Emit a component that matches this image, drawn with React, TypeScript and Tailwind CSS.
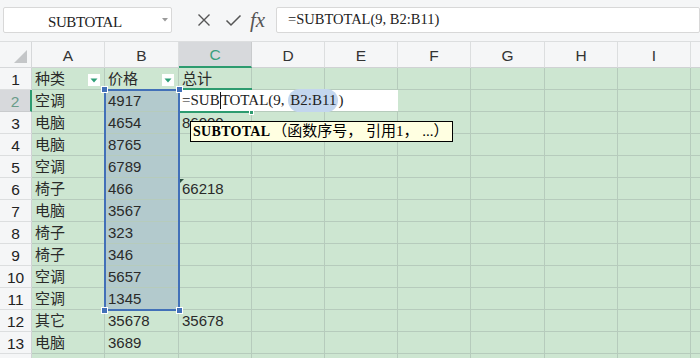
import React from "react";

const COLS = [73, 74, 73, 73, 73, 73, 74, 73, 73, 60];
const LETTERS = ["A", "B", "C", "D", "E", "F", "G", "H", "I", ""];

const A = ["种类", "空调", "电脑", "电脑", "空调", "椅子", "电脑", "椅子", "椅子", "空调", "空调", "其它", "电脑", ""];
const B = ["价格", "4917", "4654", "8765", "6789", "466", "3567", "323", "346", "5657", "1345", "35678", "3689", ""];
const C = ["总计", "", "86000", "", "", "66218", "", "", "", "", "", "35678", "", ""];

const cellFont = { fontFamily: '"Liberation Sans", "Noto Sans CJK SC", sans-serif' };
const serifFont = { fontFamily: '"Liberation Serif", "Noto Sans CJK SC", serif' };

function FilterBtn() {
  return (
    <div className="absolute right-[4px] top-[6px] w-[12px] h-[12px] bg-white flex items-center justify-center">
      <svg width="8" height="5" viewBox="0 0 8 5">
        <polygon points="0.5,0.5 7.5,0.5 4,4.5" fill="#2f9e78" />
      </svg>
    </div>
  );
}

export default function App() {
  return (
    <div className="w-[700px] h-[358px] overflow-hidden bg-[#cde6d1] relative" style={cellFont}>
      {/* toolbar */}
      <div className="h-[42px] bg-[#f5f6f7] flex items-start pt-[7px] border-b border-[#dcdedf]">
        <div className="ml-[3px] w-[169px] h-[26px] bg-white border border-[#d8d8d8] rounded-[2px] flex items-center relative">
          <span className="absolute left-[44px] top-[3px] text-[15px] tracking-[-0.4px] text-[#222]" style={serifFont}>SUBTOTAL</span>
          <svg className="absolute right-[3px] top-[10px]" width="6" height="4" viewBox="0 0 6 4">
            <polygon points="0,0 6,0 3,3.5" fill="#9a9a9a" />
          </svg>
        </div>
        <div className="w-[104px] h-[26px] flex items-center">
          <svg className="ml-[25px]" width="14" height="14" viewBox="0 0 14 14">
            <path d="M1.5 1.5 L12.5 12.5 M12.5 1.5 L1.5 12.5" stroke="#555" strokeWidth="1.4" />
          </svg>
          <svg className="ml-[14px]" width="17" height="13" viewBox="0 0 17 13">
            <path d="M1.5 6.5 L6 11 L15.5 1.5" stroke="#555" strokeWidth="1.5" fill="none" />
          </svg>
          <span className="ml-[8px] text-[21px] italic text-[#555] leading-none" style={{ fontFamily: '"Liberation Serif", serif' }}>fx</span>
        </div>
        <div className="flex-1 h-[26px] bg-white border border-[#d8d8d8] rounded-[2px] flex items-center pl-[11px]">
          <span className="text-[14.5px] text-[#222] whitespace-pre" style={serifFont}>=SUBTOTAL(9, B2:B11)</span>
        </div>
      </div>

      {/* grid */}
      <div className="relative">
        {/* header row */}
        <div className="flex h-[26px]">
          <div className="w-[32px] shrink-0 h-full bg-[#f5f6f7] border-r border-b border-[#d6d8da] relative">
            <svg className="absolute left-[14px] top-[8px]" width="13" height="13" viewBox="0 0 13 13">
              <polygon points="13,0 13,13 0,13" fill="#c4c6c8" />
            </svg>
          </div>
          {COLS.map((w, i) => {
            const sel = i === 2;
            return (
              <div
                key={i}
                className={
                  "shrink-0 h-full border-r flex items-center justify-center pt-[2px] text-[15.5px] " +
                  (sel
                    ? "bg-[#d7d9dc] border-[#c9cbcd] border-b-2 border-b-[#2d9b6f] text-[#3a9f7e]"
                    : "bg-[#f5f6f7] border-[#dcdedf] border-b border-b-[#d0d2d4] text-[#333]")
                }
                style={{ width: w }}
              >
                {LETTERS[i]}
              </div>
            );
          })}
        </div>

        {/* rows */}
        {A.map((a, r) => {
          const rowNum = r + 1;
          const activeRow = rowNum === 2;
          return (
            <div key={r} className="flex h-[22px]">
              <div
                className={
                  "w-[32px] shrink-0 h-full border-b flex items-center justify-center pt-[3px] text-[15.5px] " +
                  (activeRow
                    ? "bg-[#d7d9dc] border-[#c9cbcd] border-r-2 border-r-[#2d9b6f] text-[#6a9c8a]"
                    : "bg-[#f5f6f7] border-[#dcdedf] border-r border-r-[#d0d2d4] text-[#222]")
                }
              >
                {rowNum < 14 ? rowNum : ""}
              </div>
              {COLS.map((w, c) => {
                let text = "";
                if (c === 0) text = a;
                if (c === 1) text = B[r];
                if (c === 2) text = C[r];
                const inSel = c === 1 && rowNum >= 2 && rowNum <= 11;
                return (
                  <div
                    key={c}
                    className={
                      "shrink-0 h-full border-r border-b border-[#b6cbbc] flex items-center pl-[3px] pt-[2px] text-[15px] text-[#2a2a2a] relative whitespace-nowrap " +
                      (inSel ? "bg-[#b3cacd] border-[#a3bcbf]" : "")
                    }
                    style={{ width: w }}
                  >
                    {text}
                    {rowNum === 1 && c < 2 ? <FilterBtn /> : null}
                    {rowNum === 6 && c === 2 ? (
                      <svg className="absolute left-[1px] top-[1px]" width="4" height="4" viewBox="0 0 4 4">
                        <polygon points="0,0 4,0 0,4" fill="#2b4f3f" />
                      </svg>
                    ) : null}
                  </div>
                );
              })}
            </div>
          );
        })}

        {/* active cell green borders for C2 */}
        <div className="absolute left-[179px] top-[46px] w-[73px] h-[2px] bg-[#2d9b6f]" />
        <div className="absolute left-[179px] top-[69px] w-[73px] h-[2px] bg-[#2d9b6f]" />
        <div className="absolute left-[249px] top-[68px] w-[5px] h-[5px] bg-[#2d9b6f] border border-white" />

        {/* editing box */}
        <div className="absolute left-[179px] top-[48px] w-[219px] h-[21px] bg-white flex items-center pl-[3px]">
          <span className="text-[15px] text-[#222] flex items-center whitespace-pre" style={serifFont}>
            <span className="whitespace-pre">=SUB</span>
            <span className="w-[1px] h-[17px] bg-[#111]" />
            <span className="whitespace-pre">TOTAL(9, </span>
            <span className="bg-[#c3d6ee] rounded-full px-[2px] whitespace-pre">B2:B11</span>
            <span className="whitespace-pre">)</span>
          </span>
        </div>

        {/* selection border B2:B11 */}
        <div className="absolute left-[104px] top-[47px] w-[76px] h-[222px] border-2 border-[#4270b8]" />
        <div className="absolute left-[101px] top-[44px] w-[7px] h-[7px] bg-[#4270b8] border border-white" />
        <div className="absolute left-[176px] top-[44px] w-[7px] h-[7px] bg-[#4270b8] border border-white" />
        <div className="absolute left-[101px] top-[265px] w-[7px] h-[7px] bg-[#4270b8] border border-white" />
        <div className="absolute left-[176px] top-[265px] w-[7px] h-[7px] bg-[#4270b8] border border-white" />

        {/* tooltip */}
        <div className="absolute left-[190px] top-[79px] w-[263px] h-[21px] bg-[#ffffe1] border border-black flex items-center pl-[2px] whitespace-nowrap">
          <span className="text-[14px] font-bold text-black tracking-[0.3px]" style={serifFont}>SUBTOTAL</span>
          <span className="text-[15px] text-black ml-[2px] whitespace-pre" style={serifFont}>（函数序号， 引用1， ...）</span>
        </div>
      </div>
    </div>
  );
}
